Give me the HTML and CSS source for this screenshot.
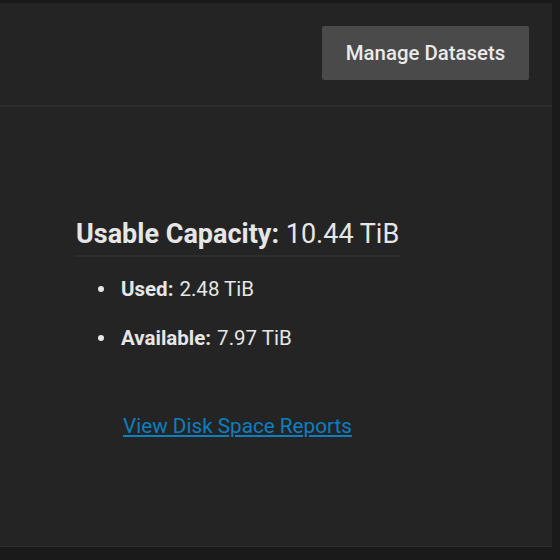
FILE: index.html
```html
<!DOCTYPE html>
<html>
<head>
<meta charset="utf-8">
<link rel="stylesheet" href="styles.css">
</head>
<body>
<div class="card">
  <div class="card-header">
    <button class="btn">Manage Datasets</button>
  </div>
  <div class="card-body">
    <div class="capacity">
      <h3 class="cap-title"><strong>Usable Capacity:</strong> 10.44 TiB</h3>
      <ul class="cap-list">
        <li><strong>Used:</strong> 2.48 TiB</li>
        <li><strong>Available:</strong> 7.97 TiB</li>
      </ul>
      <a class="report-link" href="#">View Disk Space Reports</a>
    </div>
  </div>
</div>
</body>
</html>
```
FILE: styles.css
```css
html, body {
  margin: 0;
  padding: 0;
  background: #1a1a1a;
  font-family: Roboto, "Liberation Sans", sans-serif;
  color: #e6e6e6;
}
body {
  padding-top: 3px;
}
.card {
  width: 552px;
  height: 544px;
  background: #242424;
  box-sizing: border-box;
  border-bottom: 1px solid #2e2e2e;
  display: flex;
  flex-direction: column;
}
.card-header {
  height: 104px;
  border-bottom: 2px solid #2c2c2c;
  display: flex;
  justify-content: flex-end;
  align-items: flex-start;
  padding: 23px 23px 0 0;
  box-sizing: border-box;
}
.btn {
  height: 54px;
  width: 207px;
  background: #4a4a4a;
  border: none;
  border-radius: 2px;
  color: #eaeaea;
  font-family: Roboto, "Liberation Sans", sans-serif;
  font-size: 20.4px;
  font-weight: 500;
  padding: 0;
}
.card-body {
  padding: 111px 0 0 76px;
}
.cap-title {
  margin: 0;
  font-size: 27px;
  font-weight: 400;
  line-height: 32px;
  display: inline-block;
  padding-bottom: 5px;
  border-bottom: 2px solid #2e2e2e;
  padding-right: 2px;
}
.cap-title strong {
  font-weight: 700;
}
.cap-list {
  list-style: none;
  margin: 20px 0 0 0;
  padding-left: 22px;
  font-size: 20.5px;
  line-height: 24px;
}
.cap-list li {
  display: flex;
  align-items: center;
  margin-bottom: 25px;
}
.cap-list li::before {
  content: "";
  width: 6px;
  height: 6px;
  border-radius: 50%;
  background: #e6e6e6;
  margin-right: 17px;
}
.cap-list strong {
  font-weight: 700;
  margin-right: 6px;
}
.report-link {
  display: inline-block;
  margin: 39px 0 0 47px;
  color: #0b7fc1;
  font-size: 20.7px;
  text-decoration: underline;
}
```
